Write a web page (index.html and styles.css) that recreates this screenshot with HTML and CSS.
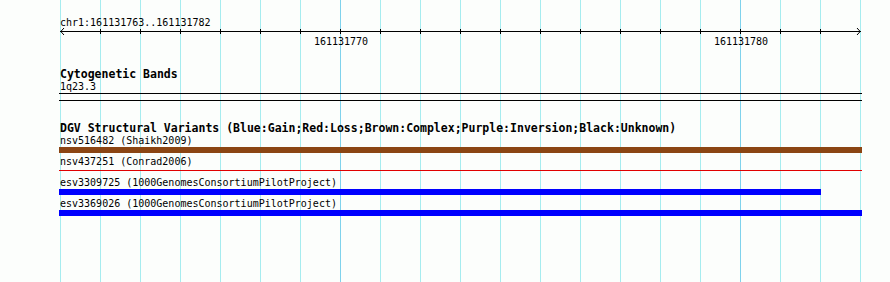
FILE: index.html
```html
<!DOCTYPE html>
<html lang="en">

<head>
     <meta charset="UTF-8">
     <meta name="viewport" content="width=device-width, initial-scale=1.0">
     <title>Genome view</title>
     <link rel="stylesheet" href="styles.css">
</head>

<body>
     <main class="view">
          <section class="ruler">
               <svg class="ruler-svg" width="890" height="50" viewBox="0 0 890 50">
                    <text class="ruler-loc" x="60" y="26">chr1:161131763..161131782</text>
                    <path class="ruler-axis" d="M60 31.5H861M64 28L60.8 31.5L64 35M857 28L860.2 31.5L857 35" />
                    <path class="ruler-ticks" d="M100.5 29V34M140.5 29V34M180.5 29V34M220.5 29V34M260.5 29V34M300.5 29V34M340.5 29V34M380.5 29V34M420.5 29V34M460.5 29V34M500.5 29V34M540.5 29V34M580.5 29V34M620.5 29V34M660.5 29V34M700.5 29V34M740.5 29V34M780.5 29V34M820.5 29V34" />
                    <text class="ruler-label" x="341" y="45">161131770</text>
                    <text class="ruler-label" x="741" y="45">161131780</text>
               </svg>
          </section>

          <section class="track track-bands">
               <h2 class="track-title">Cytogenetic Bands</h2>
               <p class="feature-label">1q23.3</p>
               <div class="band"></div>
          </section>

          <section class="track track-dgv">
               <h2 class="track-title">DGV Structural Variants (Blue:Gain;Red:Loss;Brown:Complex;Purple:Inversion;Black:Unknown)</h2>
               <article class="feature">
                    <p class="feature-label">nsv516482 (Shaikh2009)</p>
                    <div class="bar bar-complex"></div>
               </article>
               <article class="feature">
                    <p class="feature-label">nsv437251 (Conrad2006)</p>
                    <div class="bar bar-loss"></div>
               </article>
               <article class="feature">
                    <p class="feature-label">esv3309725 (1000GenomesConsortiumPilotProject)</p>
                    <div class="bar bar-gain" style="width: 762px"></div>
               </article>
               <article class="feature">
                    <p class="feature-label">esv3369026 (1000GenomesConsortiumPilotProject)</p>
                    <div class="bar bar-gain"></div>
               </article>
          </section>
     </main>
</body>
</html>
```

FILE: styles.css
```css
html {
     box-sizing: border-box;
     font-family: "DejaVu Sans Mono", "Liberation Mono", monospace;
     font-size: 10px;
}

*,
*:before,
*:after {
     box-sizing: inherit;
}

body {
     margin: 0;
     background-color: #fcfefc;
     color: #000;
}

.view {
     position: relative;
     height: 282px;
     overflow: hidden;
}

/* grid lines, one per base, drawn under the tracks */
.view:before {
     content: "";
     position: absolute;
     top: 0;
     bottom: 0;
     left: 60px;
     width: 801px;
     background-image:
          linear-gradient(to right, transparent 280px, #7fd2ec 280px, #7fd2ec 281px, transparent 281px, transparent 680px, #7fd2ec 680px, #7fd2ec 681px, transparent 681px),
          linear-gradient(to right, #a6ecef 1px, transparent 1px);
     background-size: 100% 100%, 40px 100%;
     background-repeat: no-repeat, repeat-x;
}

.ruler,
.track {
     position: relative;
}

.ruler-svg {
     display: block;
}

.ruler-svg text {
     font-family: "DejaVu Sans Mono", monospace;
     font-size: 10px;
     fill: #000;
}

.ruler-label {
     text-anchor: middle;
}

.ruler-axis,
.ruler-ticks {
     fill: none;
     stroke: #000;
     stroke-width: 1;
}

.track {
     padding-left: 59px;
}

.track-title {
     margin: 0;
     padding-left: 1px;
     font-size: 11.5px;
     font-weight: bold;
     line-height: 13px;
}

.feature-label {
     margin: 0;
     padding-left: 1px;
     line-height: 11px;
     white-space: nowrap;
}

.track-bands {
     margin-top: 18px;
}

.band {
     width: 803px;
     height: 8px;
     margin-top: 1px;
     border-top: 1px solid #000;
     border-bottom: 1px solid #000;
}

.track-dgv {
     margin-top: 21px;
}

.feature {
     height: 21px;
}

.bar {
     width: 803px;
     height: 6px;
     margin-top: 1px;
}

.bar-complex {
     background-color: #8b4513;
}

.bar-gain {
     background-color: #0000ff;
}

.bar-loss {
     background: linear-gradient(#e00000, #e00000) no-repeat 0 2px / 100% 1px;
}
```
